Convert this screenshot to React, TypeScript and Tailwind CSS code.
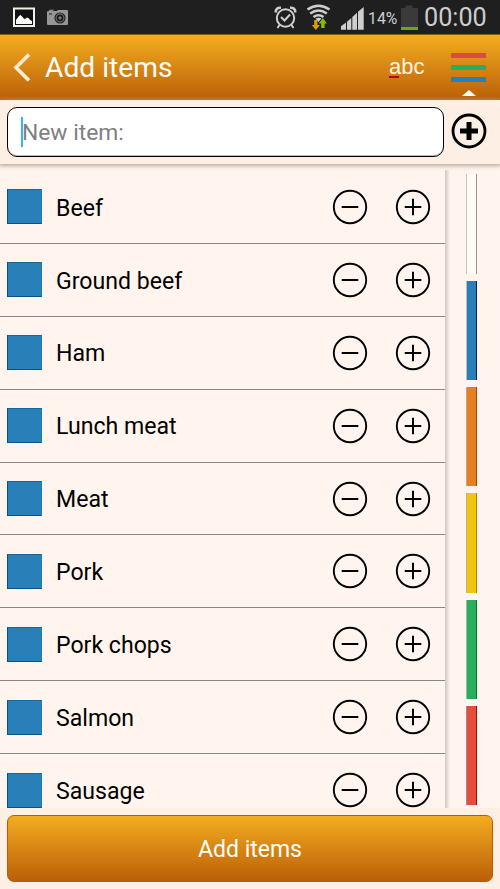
const items = ["Beef", "Ground beef", "Ham", "Lunch meat", "Meat", "Pork", "Pork chops", "Salmon", "Sausage"];

const categories = [
  "border-l-[#c9c2bb] border-r-[#999490] bg-[#fffaf4]",
  "border-l-[#c0bab4] border-r-[#00205f] bg-[#2980b9]",
  "border-l-[#c0a890] border-r-[#9c4a05] bg-[#e67e22]",
  "border-l-[#c0b080] border-r-[#a58a08] bg-[#f1c40f]",
  "border-l-[#9fb9a5] border-r-[#08733a] bg-[#27ae60]",
  "border-l-[#98918c] border-r-[#990f08] bg-[#e74c3c]",
];

function RoundIcon({ plus = false }: { plus?: boolean }) {
  return (
    <svg className="size-9" viewBox="0 0 36 36" fill="none" stroke="#000">
      <circle cx="18" cy="18" r="16.2" strokeWidth="1.9" />
      <path d={plus ? "M9.7 18H26.3M18 9.7V26.3" : "M9.7 18H26.3"} strokeWidth="2" />
    </svg>
  );
}

function StatusBar() {
  return (
    <div className="flex h-[34px] shrink-0 items-center bg-[#1f1f1f] pr-[13px]">
      <svg className="ml-3 size-6" viewBox="12 5 24 24">
        <path d="M14 8.5H34V26H14Z" fill="#101010" stroke="#f3f0e9" strokeWidth="2" />
        <path d="M16 24V20L19 16L20.5 15L22 16.5L24 18.8L25 19L27 17.5L29 18.5L30 20L32 21V24Z" fill="#fff" />
      </svg>
      <svg className="ml-[10px] size-6" viewBox="46 5 24 24">
        <path d="M49 10H53V11H57L58 10H67Q68 10 68 11V24Q68 25 67 25H48Q47 25 47 24V12Q47 11 49 11Z" fill="#969696" />
        <path d="M50 10H54" stroke="#666" />
        <circle cx="60" cy="18" r="5" fill="#858585" stroke="#222" strokeWidth="1.2" />
        <circle cx="60" cy="18" r="2.6" fill="#777" stroke="#161616" strokeWidth="1.8" />
        <path d="M49 14H52" stroke="#444" strokeWidth="1.5" />
      </svg>
      <div className="grow" />
      <svg className="h-[34px] w-[92px]" viewBox="274 0 92 34" fill="none">
        <g stroke="#cecece" strokeWidth="2">
          <circle cx="285.5" cy="18" r="8.7" />
          <path d="M281 17L284.5 20.5L290 14.5M279.5 25L277.5 28M291.5 25L293.5 28" />
          <path d="M275.8 12.5C275.5 9 277.5 7.5 281 7.8M295.2 12.5C295.5 9 293.5 7.5 290 7.8" strokeWidth="2.6" />
        </g>
        <g stroke="#cecece" strokeWidth="2.6">
          <path d="M307.5 9.5Q318.5 2 329.5 9.5M310.2 13.5Q318.5 7.5 326.8 13.5M313.5 17Q318.5 13.5 323.5 17" />
        </g>
        <path d="M315.5 18.5Q318.5 16.8 321.5 18.5L318.5 22Z" fill="#cecece" />
        <path d="M314.2 20H317.4V25H320L315.8 30L311.8 25H314.2Z" fill="#d5a300" />
        <path d="M321.2 28H324.6V23.4H327L322.9 18L318.8 23.4H321.2Z" fill="#82bd00" />
        <path d="M341 29.8V26.2L346 22.5V29.8ZM347 29.8V21.8L351.3 18V29.8ZM352.3 29.8V17L357 12.8V29.8ZM358 29.8V11.8L363.7 7V29.8Z" fill="#cecece" />
      </svg>
      <span className="ml-[2px] w-[32px] whitespace-nowrap pt-[3px] text-[15.8px] leading-none text-[#cecece]">14%</span>
      <svg className="h-[34px] w-[19px]" viewBox="400 0 19 34">
        <path d="M401 30V8H405.5V5.5H412.5V8H418V30Z" fill="#3a3a3a" />
        <path d="M401 27H418V30H401Z" fill="#72a800" />
      </svg>
      <span className="ml-[5px] w-[63px] whitespace-nowrap pt-[2px] text-[25.2px] leading-[34px] text-[#cecece]">00:00</span>
    </div>
  );
}

function Header() {
  return (
    <header className="flex h-[66px] shrink-0 items-center border-t border-[#8f5b0c] bg-linear-to-b from-[#f3ad20] to-[#ba5f08] shadow-[inset_0_-1px_#b94b04]">
      <svg className="ml-3 h-[34px] w-5" viewBox="12 50 20 34" fill="none">
        <path d="M29 53.5L16 66.5L29 79.5" stroke="#fbebd5" strokeWidth="3.6" />
      </svg>
      <h1 className="ml-[13px] pt-[2px] text-[28.2px] text-white">Add items</h1>
      <div className="grow" />
      <div className="relative mb-[2px] w-[35px] font-['Liberation_Sans',Arial,sans-serif] text-[22px] text-[#fff5e7]">
        abc
        <span className="absolute top-[26px] left-0 h-[2px] w-[10px] bg-[#b40719]" />
      </div>
      <div className="relative mr-[14px] ml-[27px] flex h-full w-[35px] flex-col gap-[7px] pt-[17.5px]">
        <span className="h-[5px] bg-[#d44e43]" />
        <span className="h-[5px] bg-[#27ae60]" />
        <span className="h-[5px] bg-[#2980b9]" />
        <svg className="absolute bottom-[4px] left-[11px] h-[6px] w-[14px]" viewBox="0 0 14 6"><path d="M0 6L7 0L14 6Z" fill="#fff" /></svg>
      </div>
    </header>
  );
}

export default function App() {
  return (
    <div className="flex h-[889px] w-[500px] flex-col overflow-hidden bg-[#feefe4] font-[Roboto,sans-serif]">
      <StatusBar />
      <Header />
      <div className="z-10 flex h-[64px] shrink-0 items-start bg-[#feefe4] pt-[7px] pl-[7px] shadow-[0_1px_4px_1px_#b9aaa0]">
        <div className="flex h-[50px] w-[437px] items-center rounded-[10px] border-[1.4px] border-black bg-white pl-[13px] shadow-[inset_0_-1px_#bbb]">
          <span className="h-[30px] w-[2px] bg-[#33b5ff]" />
          <span className="-ml-px pt-[3px] text-[22.8px] text-[#7f7f7f]">New item:</span>
        </div>
        <svg className="mt-[6px] ml-[7px] size-9" viewBox="0 0 36 36" fill="none" stroke="#000">
          <circle cx="18" cy="18" r="16" strokeWidth="2.8" />
          <path d="M9 18H27M18 9V27" strokeWidth="5" />
        </svg>
      </div>
      <main className="flex h-[644px] shrink-0 overflow-hidden bg-[#fff5ee] pt-[6px]">
        <div className="w-[445px] shrink-0 pt-px">
          {items.map((item) => (
            <div key={item} className="flex h-[72.9px] items-center border-b border-[#888583] pl-[7px]">
              <span className="size-[35px] border border-t-[#17669a] border-r-[#0c88bb] border-b-[#07518b] border-l-[#07518b] bg-[#2980b9]" />
              <span className="ml-[14px] grow pt-[4px] text-[23.1px] text-black">{item}</span>
              <RoundIcon />
              <span className="w-[26.5px]" />
              <RoundIcon plus />
              <span className="w-[14.5px]" />
            </div>
          ))}
        </div>
        <div className="h-[638px] w-[5px] shrink-0 bg-linear-to-r from-[#cfc6c0] to-[#fff5ee]" />
        <nav className="ml-4 flex w-[11px] flex-col gap-[6.8px] pt-[4.4px]">
          {categories.map((category) => (
            <span key={category} className={`h-[99.5px] shrink-0 border-r border-l ${category}`} />
          ))}
        </nav>
      </main>
      <footer className="h-[81px] shrink-0 px-[7px] pt-[7px]">
        <button className="flex h-[67px] w-full items-center justify-center rounded-[7px] border border-[#bd5908] bg-linear-to-b from-[#f3ad20] to-[#ba5f08] pt-[3px] text-[23px] text-white">Add items</button>
      </footer>
    </div>
  );
}
